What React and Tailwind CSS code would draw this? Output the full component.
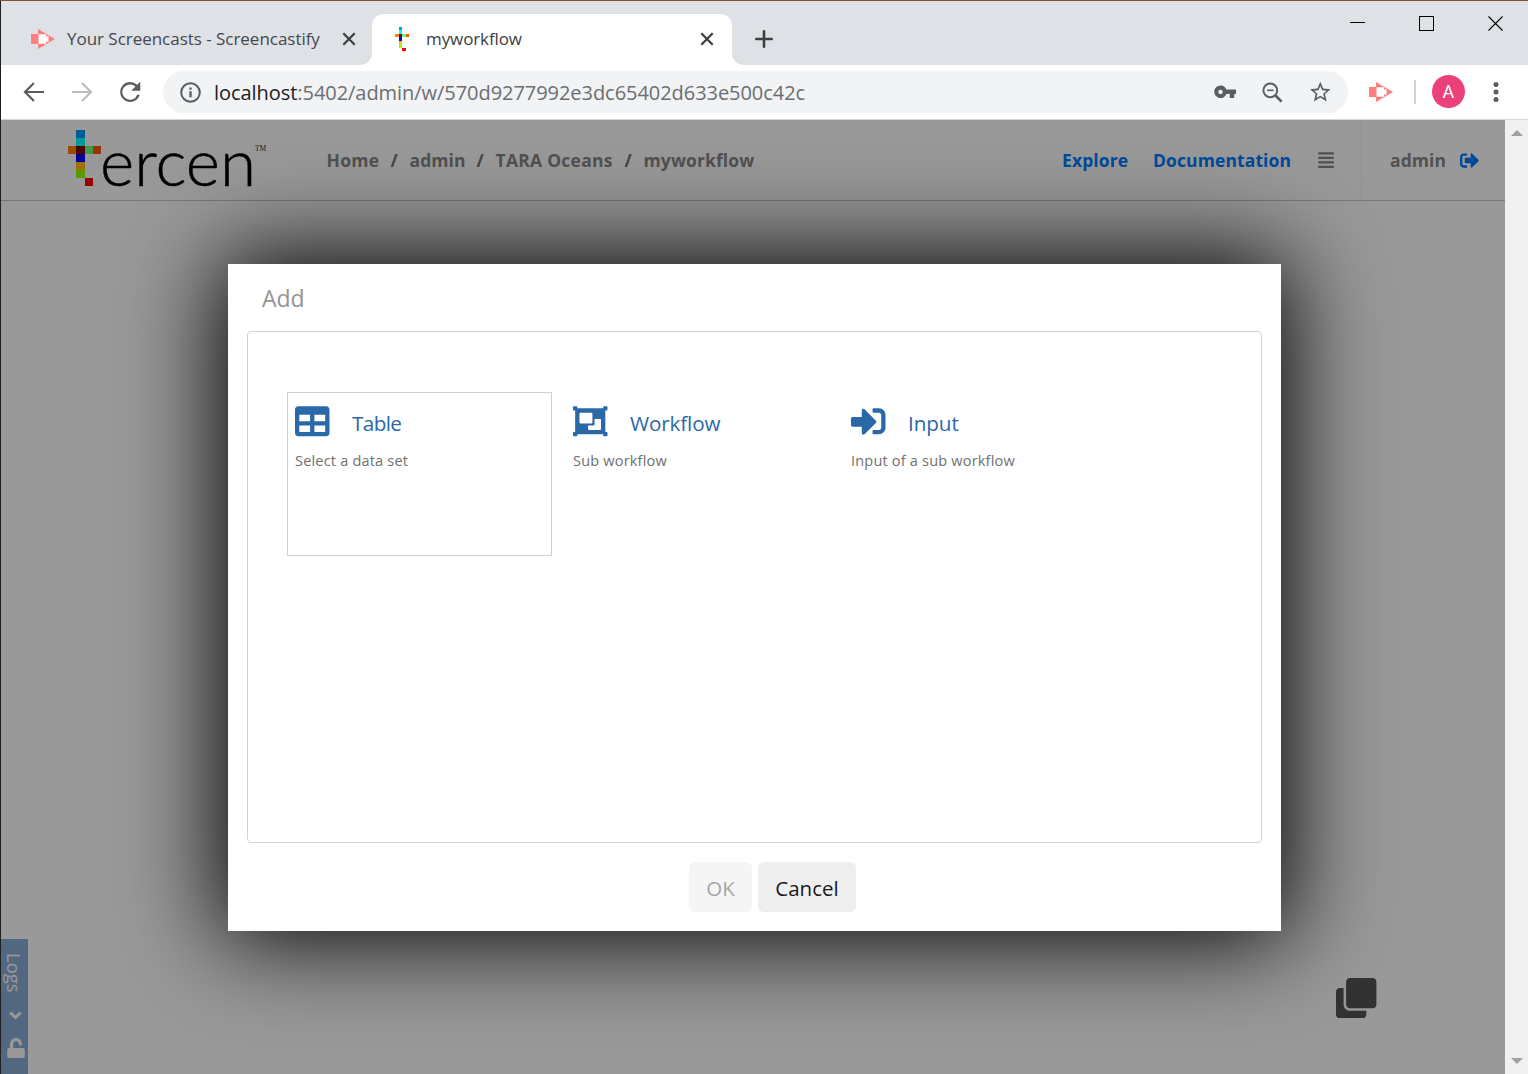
import React from "react";
import { FaTable, FaObjectGroup, FaSignInAlt, FaSignOutAlt, FaClone, FaUnlock, FaAlignJustify } from "react-icons/fa";

const SANS = "font-['Open_Sans',sans-serif]";

function Screencastify() {
  return (
    <svg width="24" height="20" viewBox="0 0 24 20" className="shrink-0">
      <path d="M7 0 24 10 7 20Z" fill="#ff7f7f" />
      <rect x="0" y="5" width="8" height="10" fill="#ff7f7f" />
      <path d="M7.5 5.3h7.6v2.7l2.4-1.6v7.2l-2.4-1.6v2.7H7.5Z" fill="#fff" />
    </svg>
  );
}

const PIXELS = [
  [1, 0, "#0099ff"],
  [1, 1, "#00ffff"],
  [0, 2, "#ff8000"],
  [1, 2, "#800000"],
  [2, 2, "#66ff80"],
  [3, 2, "#ff5500"],
  [1, 3, "#0000ff"],
  [1, 4, "#ffbf00"],
  [1, 5, "#99ff00"],
  [2, 6, "#ff0000"],
];

function PixelT({ width, height }) {
  return (
    <svg width={width} height={height} viewBox="0 0 4 7" preserveAspectRatio="none" shapeRendering="crispEdges" className="shrink-0">
      {PIXELS.map(([x, y, c]) => (
        <rect key={x + "-" + y} x={x} y={y} width="1" height="1" fill={c} />
      ))}
    </svg>
  );
}

function Cross() {
  return (
    <svg width="14" height="14" viewBox="0 0 14 14" className="shrink-0" stroke="#3c4043" strokeWidth="2.3" fill="none">
      <path d="M1.3 1.3 12.7 12.7M12.7 1.3 1.3 12.7" />
    </svg>
  );
}

function TabStrip() {
  return (
    <div className="flex h-[64px] bg-[#dee1e6]">
      <div className="flex h-[64px] w-[371px] bg-white">
        <div className="flex h-[64px] w-[371px] items-center rounded-br-[12px] bg-[#dee1e6] pt-[12px] pl-[30px]">
          <Screencastify />
          <span className="ml-[12px] w-[275px] text-[17px] tracking-[-0.03px] whitespace-nowrap text-[#45484c]">Your Screencasts - Screencastify</span>
          <Cross />
        </div>
      </div>
      <div className="mt-[13px] flex h-[51px] w-[360px] items-center rounded-t-[12px] bg-white pb-px pl-[23px]">
        <PixelT width={14} height={24} />
        <span className="ml-[17px] w-[274.4px] text-[17px] tracking-[-0.1px] whitespace-nowrap text-[#3c4043]">myworkflow</span>
        <Cross />
      </div>
      <div className="flex grow bg-white">
        <div className="flex h-[64px] grow rounded-bl-[12px] bg-[#dee1e6]">
          <svg width="18" height="18" viewBox="0 0 18 18" className="mt-[29px] ml-[23.4px]" stroke="#3c4043" strokeWidth="2.6" strokeLinecap="round">
            <path d="M9 1.3V16.7M1.3 9H16.7" />
          </svg>
          <svg width="154" height="16" viewBox="0 0 154 16" className="mt-[14px] mr-[24px] ml-auto" stroke="#000" fill="none">
            <path d="M0 7.5H15" shapeRendering="crispEdges" />
            <rect x="69.5" y="1.5" width="14" height="14" />
            <path d="M138.5 1.5 152.5 15.5M152.5 1.5 138.5 15.5" strokeWidth="1.1" />
          </svg>
        </div>
      </div>
    </div>
  );
}

function Toolbar() {
  return (
    <div className="flex h-[55px] items-center border-b border-[#d4d6d9] bg-white pl-[21px]">
      <svg width="24" height="24" viewBox="0 0 24 24" fill="none" stroke="#5a5d61" strokeWidth="2.2" className="mb-px shrink-0">
        <path d="M22 12H3M12 3 3 12l9 9" />
      </svg>
      <svg width="24" height="24" viewBox="0 0 24 24" fill="none" stroke="#bbbdbf" strokeWidth="2.2" className="mb-px ml-[24px] shrink-0">
        <path d="M2 12h19M12 3l9 9-9 9" />
      </svg>
      <svg width="26" height="26" viewBox="0 0 24 24" fill="#5a5d61" className="mb-px ml-[23px] shrink-0">
        <path d="M18.6 5.4A9.2 9.2 0 1 0 21 14.5h-2.3A7.1 7.1 0 1 1 17 7L13.2 10.8H21.5V2.5Z" />
      </svg>
      <div className="ml-[20px] flex h-[42px] w-[1185px] shrink-0 items-center rounded-full bg-[#f1f3f4] pl-[17px]">
        <svg width="21" height="21" viewBox="0 0 21 21" fill="none" stroke="#5a5d61" strokeWidth="2" className="shrink-0">
          <circle cx="10.5" cy="10.5" r="9.3" />
          <path d="M10.5 9.3V15.3M10.5 5.5V7.8" strokeWidth="2.3" />
        </svg>
        <span className="ml-[13px] w-[1000px] pt-[2px] text-[20px] tracking-[-0.05px] whitespace-nowrap text-[#6b6e72]">
          <span className="text-[#202124]">localhost</span>:5402/admin/w/570d9277992e3dc65402d633e500c42c
        </span>
        <svg width="22" height="14" viewBox="0 0 22 14" fill="#5a5d61" className="shrink-0">
          <path fillRule="evenodd" d="M6.5.5a6.3 6.3 0 0 1 5.9 4H22v4.6h-1.8V13h-4.4V9.1h-3.4A6.3 6.3 0 1 1 6.5.5Zm0 4.2a2.2 2.2 0 1 0 0 4.4a2.2 2.2 0 0 0 0-4.4Z" />
        </svg>
        <svg width="21" height="21" viewBox="0 0 21 21" fill="none" stroke="#5a5d61" strokeWidth="2" className="ml-[26.4px] shrink-0">
          <circle cx="8.3" cy="8.3" r="6.9" />
          <path d="M5 8.3H11.6" strokeWidth="1.6" />
          <path d="M13 13 19.6 19.6" strokeWidth="2.7" />
        </svg>
        <svg width="24" height="24" viewBox="0 0 24 24" fill="#5a5d61" className="ml-[25px] shrink-0">
          <path d="M22.6 9.24l-7.4-.64L12.3 1.7 9.4 8.61 2 9.24l5.6 4.87L5.92 21.5 12.3 17.6l6.36 3.9-1.67-7.39ZM12.3 15.7l-3.88 2.37 1.03-4.44-3.43-2.98 4.53-.39L12.3 6.1l1.76 4.17 4.53.39-3.43 2.98 1.03 4.44Z" />
        </svg>
      </div>
      <div className="ml-[21.4px]"><Screencastify /></div>
      <div className="ml-[20.6px] h-[24px] w-[2px] bg-[#cfd1d4]" />
      <div className="mb-px ml-[16px] flex size-[33px] items-center justify-center rounded-full bg-[#ec407a] font-[Roboto,sans-serif] text-[18px] text-white">A</div>
      <svg width="6" height="20" viewBox="0 0 6 20" fill="#5a5d61" className="ml-[28.4px]">
        <circle cx="3" cy="2.6" r="2.5" />
        <circle cx="3" cy="10" r="2.5" />
        <circle cx="3" cy="17.4" r="2.5" />
      </svg>
    </div>
  );
}

function Header() {
  return (
    <header className="flex h-[80px] text-[17.5px] font-bold whitespace-nowrap text-[#888] shadow-[0_1px_0_#c6c6c6]">
      <div className="flex w-[325.5px] pt-[10px] pl-[67px]">
        <PixelT width={33} height={56} />
        <span className="mt-[-1px] ml-[-1px] w-[155px] font-[Lato,sans-serif] text-[65.5px] leading-[64px] font-light text-black [-webkit-text-stroke:0.5px_#000]">ercen</span>
        <span className="mt-[15px] font-['Liberation_Serif',serif] text-[7.5px] leading-[8px] font-normal text-[#333]">TM</span>
      </div>
      <nav className="flex grow items-center">
        <span className="w-[64px] tracking-[0.3px]">Home</span>
        <span className="w-[19px] text-[#6c757d]">/</span>
        <span className="w-[67px] tracking-[0.06px]">admin</span>
        <span className="w-[19px] text-[#6c757d]">/</span>
        <span className="w-[129px] tracking-[0.25px]">TARA Oceans</span>
        <span className="w-[19px] text-[#6c757d]">/</span>
        <span className="tracking-[0.12px]">myworkflow</span>
      </nav>
      <nav className="flex w-[443px] items-center text-[#007bff]">
        <span className="w-[91px] tracking-[0.12px]">Explore</span>
        <span className="w-[164px] tracking-[0.1px]">Documentation</span>
        <FaAlignJustify className="h-[18px] w-[18px] text-[#888]" />
        <span className="ml-[26px] h-full w-px bg-[#f0f0f0]" />
        <span className="ml-[28px] w-[69.5px] tracking-[0.06px] text-[#888]">admin</span>
        <FaSignOutAlt className="size-[19px]" />
      </nav>
    </header>
  );
}

const STEPS = [
  { title: "Table", text: "Select a data set", Icon: FaTable, selected: true, tracking: "tracking-[-0.6px]" },
  { title: "Workflow", text: "Sub workflow", Icon: FaObjectGroup, tracking: "tracking-[-0.15px]" },
  { title: "Input", text: "Input of a sub workflow", Icon: FaSignInAlt, tracking: "tracking-[-0.1px]" },
];

function AddDialog() {
  return (
    <div className="absolute top-[144px] left-[227px] flex h-[667px] w-[1053px] flex-col bg-white px-[19px] shadow-[0_0_92px_7px_#000]">
      <h1 className="h-[67px] pt-[17px] pl-[15px] text-[23px] leading-[34px] text-[#949494]">Add</h1>
      <div className="flex h-[512px] gap-[13px] rounded-[4px] border border-[#d0d3d6] pt-[60px] pl-[39px]">
        {STEPS.map(({ title, text, Icon, selected, tracking }) => (
          <div key={title} className={"h-[164px] w-[265px] border pt-[11px] pl-[7px] " + (selected ? "border-[#cfcfcf]" : "border-transparent")}>
            <div className="flex h-[40px] text-[#2a69a8]">
              <Icon className="size-[34.5px]" />
              <span className={"ml-[22.5px] pt-[2px] text-[20.7px] leading-[35px] " + tracking}>{title}</span>
            </div>
            <p className="mt-[5px] text-[14.5px] leading-[24px] tracking-[0.2px] whitespace-nowrap text-[#707070]">{text}</p>
          </div>
        ))}
      </div>
      <div className="mt-[19px] flex gap-[6px] pl-[442px] text-[20.5px]">
        <button className="h-[50px] w-[63px] rounded-[6px] bg-[#f5f5f5] pt-[2px] text-[#a6a6a6]">OK</button>
        <button className="h-[50px] w-[98px] rounded-[6px] bg-[#efefef] pt-[2px] text-[#1a1a1a]">Cancel</button>
      </div>
    </div>
  );
}

export default function App() {
  return (
    <div className={"flex h-[1074px] w-[1528px] flex-col overflow-hidden border-t border-[#7d553c] bg-white " + SANS}>
      <div className="flex grow flex-col border-l border-[#1f1f1f]">
        <TabStrip />
        <Toolbar />
        <div className="flex h-[954px]">
          <main className="relative h-[954px] w-[1504px] overflow-hidden bg-white">
            <Header />
            <div className="absolute bottom-0 left-0 flex h-[135px] w-[27px] flex-col items-center bg-[#87add5] text-white">
              <span className="mt-[14px] h-[46px] text-[18.5px] leading-[25px] [writing-mode:vertical-rl]">Logs</span>
              <svg width="13" height="9" viewBox="0 0 13 9" className="mt-[11.5px] ml-[2px] shrink-0" fill="none" stroke="#fff" strokeWidth="3">
                <path d="M1.3 1.5 6.5 6.5 11.7 1.5" />
              </svg>
              <FaUnlock className="mt-[18.5px] ml-[3px] h-[20px] w-[18px] shrink-0" />
            </div>
            <FaClone className="absolute top-[858px] left-[1335.3px] size-[40.4px] text-[#555]" />
            <div className="absolute inset-0 bg-black/40" />
            <AddDialog />
          </main>
          <div className="flex w-[23px] flex-col items-center justify-between bg-[#f0f0f0] pt-[10px] pb-[10px]">
            <svg width="12" height="6" viewBox="0 0 12 6" fill="#a0a0a0"><path d="M0 6 6 0 12 6Z" /></svg>
            <svg width="12" height="6" viewBox="0 0 12 6" fill="#a0a0a0"><path d="M0 0 6 6 12 0Z" /></svg>
          </div>
        </div>
      </div>
    </div>
  );
}
